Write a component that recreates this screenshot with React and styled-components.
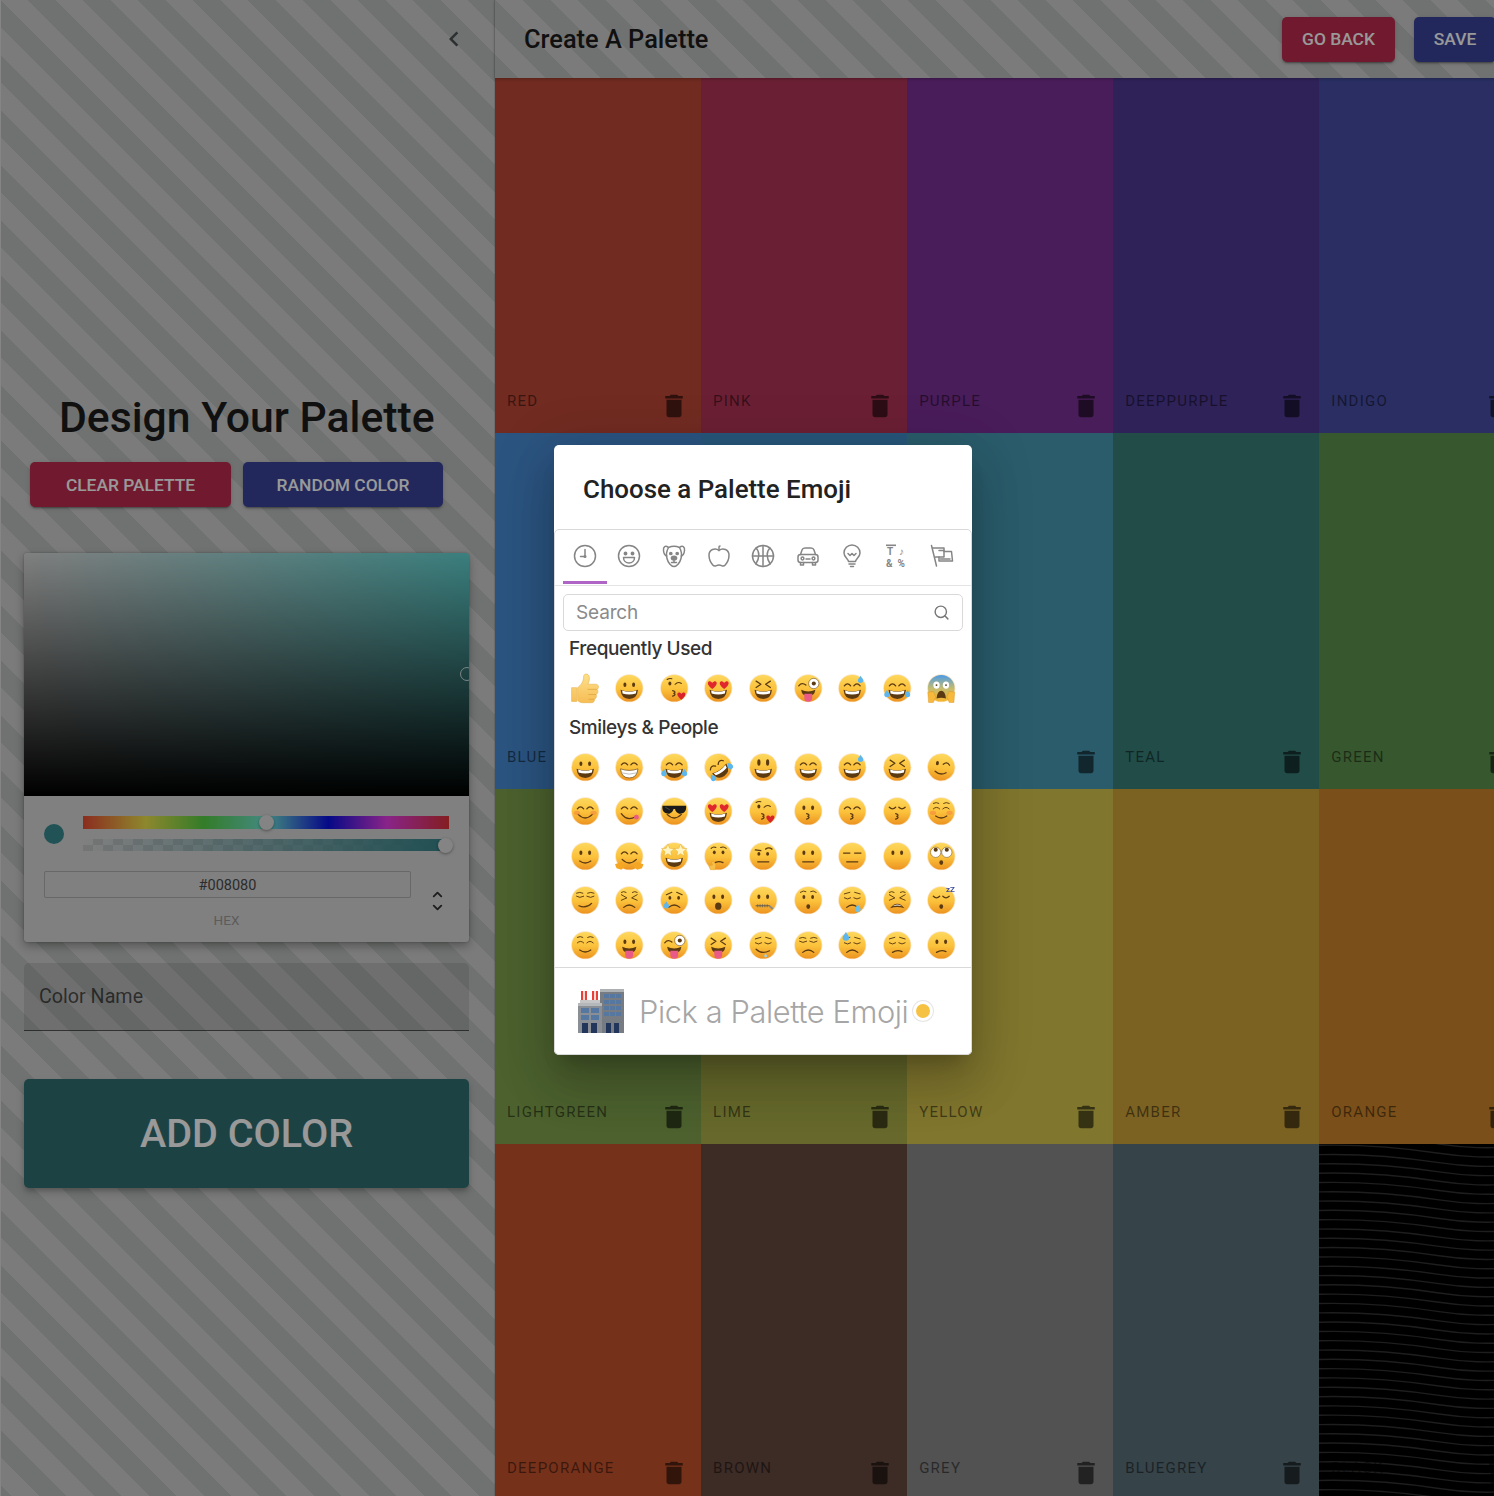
import React from "react";
import styled, { createGlobalStyle } from "styled-components";
import { Apple, ChevronDown, ChevronUp, Search } from "lucide-react";

const GlobalStyle = createGlobalStyle`
  html, body {
    margin: 0;
    overflow: hidden;
    font-family: Roboto, "Liberation Sans", sans-serif;
  }
  * { box-sizing: border-box; }
`;

const PageRoot = styled.div`
  position: relative;
  display: flex;
  width: 1525px;
  height: 1496px;
  overflow: hidden;
  background: repeating-linear-gradient(
    45deg,
    #b9bebb 0 8.2px,
    #cdcdcd 8.2px 27.6px,
    #b9bebb 27.6px 38.89px
  );
`;

const Sidebar = styled.aside`
  flex: 0 0 494.6px;
  display: flex;
  flex-direction: column;
  border-right: 1px solid rgba(0, 0, 0, 0.1);
  box-shadow: inset 1px 0 0 #dedede;
`;

const SidebarHead = styled.div`
  height: 78px;
  display: flex;
  align-items: center;
  justify-content: flex-end;
  padding-right: 25px;
  color: #4c5050;
`;

const Title = styled.h4`
  margin: 318px 0 0;
  font-size: 42.7px;
  line-height: 42px;
  font-weight: 500;
  text-align: center;
  color: #1c1c1c;
`;

const ButtonRow = styled.div`
  display: flex;
  gap: 12px;
  margin: 24px 0 46px 30px;
`;

const RaisedButton = styled.button`
  border: 0;
  border-radius: 5px;
  color: #fff;
  font-family: inherit;
  font-weight: 500;
  font-size: ${(p) => p.$size || 17.4}px;
  text-transform: uppercase;
  width: ${(p) => p.$width}px;
  height: ${(p) => p.$height || 45}px;
  flex: none;
  background: ${(p) => p.$bg};
  box-shadow: 0 3px 1px -2px rgba(0, 0, 0, 0.2), 0 2px 2px rgba(0, 0, 0, 0.14),
    0 1px 5px rgba(0, 0, 0, 0.12);
`;

const Picker = styled.div`
  margin-left: 24px;
  width: 445px;
  height: 389px;
  border-radius: 3px;
  background: #d5d5d5;
  overflow: hidden;
  box-shadow: 0 0 2px rgba(0, 0, 0, 0.3), 0 4px 10px rgba(0, 0, 0, 0.3);
`;

const Saturation = styled.div`
  position: relative;
  height: 243px;
  overflow: hidden;
  background: linear-gradient(to bottom, rgba(0, 0, 0, 0), #000),
    linear-gradient(to right, #d5d5d5, #62d4d2);
`;

const SatPointer = styled.span`
  position: absolute;
  left: 436px;
  top: 114px;
  width: 14px;
  height: 14px;
  border: 1.5px solid #c9dede;
  border-radius: 50%;
`;

const SliderRow = styled.div`
  display: flex;
  align-items: center;
  padding: 20px 20px 0;
  gap: 19px;
`;

const ColorDot = styled.span`
  flex: none;
  width: 20px;
  height: 20px;
  border-radius: 50%;
  background: #36898f;
`;

const Sliders = styled.div`
  flex: 1;
  display: flex;
  flex-direction: column;
  gap: 10px;
`;

const Track = styled.div`
  position: relative;
  height: ${(p) => p.$height}px;
`;

const HueTrack = styled(Track)`
  background: linear-gradient(
    to right,
    #e84a33 0%,
    #ece24c 17%,
    #55cf45 33%,
    #72e6d6 50%,
    #0a10e0 67%,
    #e43ce4 83%,
    #dc3236 100%
  );
`;

const AlphaTrack = styled(Track)`
  background: linear-gradient(to right, rgba(54, 137, 143, 0), #36848a),
    repeating-conic-gradient(#c3c3c3 0 25%, #d5d5d5 0 50%) 0 0 / 20px 12px;
`;

const Thumb = styled.span`
  position: absolute;
  top: 50%;
  left: ${(p) => p.$left}px;
  width: 15px;
  height: 15px;
  margin: -7.5px 0 0 -7.5px;
  border-radius: 50%;
  background: #dcdcdc;
  box-shadow: 0 1px 3px rgba(0, 0, 0, 0.37);
`;

const FieldRow = styled.div`
  display: flex;
  padding: 20px 6px 0 20px;
`;

const HexField = styled.div`
  width: 367px;
  text-align: center;
`;

const HexInput = styled.div`
  height: 27px;
  line-height: 29px;
  font-size: 14.5px;
  color: #4a4a4a;
  border-radius: 2px;
  box-shadow: inset 0 0 0 1px #adadad;
`;

const HexLabel = styled.div`
  margin-top: 14px;
  padding-right: 2px;
  font-size: 13.5px;
  line-height: 16px;
  color: #9a9a9a;
`;

const Toggle = styled.div`
  width: 52px;
  padding-top: 16px;
  display: flex;
  flex-direction: column;
  align-items: center;
  color: #333;
  svg { display: block; margin-bottom: -2px; }
`;

const NameInput = styled.input`
  display: block;
  margin: 21px 0 48px 24px;
  width: 445px;
  height: 68px;
  padding: 0 15px;
  border: 0;
  border-bottom: 1.5px solid rgba(0, 0, 0, 0.55);
  border-radius: 5px 5px 0 0;
  background: rgba(0, 0, 0, 0.09);
  font-family: inherit;
  font-size: 19.7px;
  &::placeholder { color: rgba(0, 0, 0, 0.62); opacity: 1; }
`;

const AddColor = styled(RaisedButton)`
  margin-left: 24px;
  box-shadow: 0 3px 5px -1px rgba(0, 0, 0, 0.2), 0 5px 8px rgba(0, 0, 0, 0.14);
`;

const Main = styled.main`
  flex: 1;
  display: flex;
  flex-direction: column;
  min-width: 0;
`;

const TopBar = styled.header`
  position: relative;
  z-index: 1;
  flex: 0 0 78px;
  display: flex;
  align-items: center;
  padding: 0 29px 0 29.4px;
  box-shadow: 0 1px 3px rgba(0, 0, 0, 0.25);
`;

const TopTitle = styled.h6`
  margin: 0;
  flex: 1;
  font-size: 25.4px;
  font-weight: 500;
  color: #1c1c1c;
`;

const TopActions = styled.div`
  display: flex;
  gap: 19px;
`;

const SwatchGrid = styled.div`
  display: grid;
  grid-template-columns: repeat(5, 1fr);
  grid-auto-rows: 355.4px;
`;

const SwatchBox = styled.div`
  position: relative;
  display: flex;
  align-items: flex-end;
  justify-content: space-between;
  padding: 0 12px 12px 12.4px;
  background: ${(p) => p.$bg};
  overflow: hidden;
`;

const SwatchName = styled.span`
  position: relative;
  margin-bottom: 12px;
  font-size: 15px;
  line-height: 16px;
  letter-spacing: 1.25px;
  text-transform: uppercase;
  color: rgba(0, 0, 0, 0.5);
`;

const Trash = styled.svg`
  position: relative;
  width: 30px;
  height: 30px;
  fill: rgba(0, 0, 0, 0.58);
`;

const Waves = styled.svg`
  position: absolute;
  inset: 0;
  width: 100%;
  height: 100%;
`;

const Backdrop = styled.div`
  position: absolute;
  inset: 0;
  z-index: 2;
  display: flex;
  align-items: center;
  justify-content: center;
  padding: 4px 0 0 1px;
  background: rgba(0, 0, 0, 0.4);
`;

const Dialog = styled.div`
  width: 418px;
  height: 610px;
  display: flex;
  flex-direction: column;
  background: #fff;
  border-radius: 5px;
  box-shadow: 0 14px 19px -9px rgba(0, 0, 0, 0.2), 0 30px 47px 4px rgba(0, 0, 0, 0.14),
    0 11px 57px 10px rgba(0, 0, 0, 0.12);
`;

const DialogTitle = styled.h2`
  margin: 0;
  height: 84px;
  padding: 29px 29px 0;
  font-size: 25.9px;
  line-height: 30px;
  font-weight: 500;
  color: #222;
`;

const EmojiPicker = styled.div`
  flex: 1;
  display: flex;
  flex-direction: column;
  border: 1px solid #d9d9d9;
  border-radius: 5px;
  min-height: 0;
`;

const TabBar = styled.div`
  flex: 0 0 56px;
  display: flex;
  padding: 0 7.5px 1px;
  border-bottom: 1px solid #e4e4e4;
`;

const Tab = styled.span`
  flex: 0 0 44.6px;
  display: flex;
  align-items: center;
  justify-content: center;
  padding-top: 1px;
  border-bottom: 3px solid ${(p) => (p.$active ? "#ae65c5" : "transparent")};
  color: #858585;
  svg { width: 24px; height: 24px; }
`;

const LineIcon = styled.svg`
  fill: none;
  stroke: currentColor;
  stroke-width: 1.5;
  stroke-linecap: round;
  stroke-linejoin: round;
`;

const SearchBox = styled.div`
  flex: none;
  display: flex;
  align-items: center;
  margin: 8px 8px 0;
  height: 37px;
  padding: 0 12px;
  border: 1px solid #d9d9d9;
  border-radius: 5px;
  color: #777;
`;

const SearchInput = styled.input`
  flex: 1;
  min-width: 0;
  border: 0;
  outline: 0;
  padding: 0;
  font-family: "Inter", Roboto, sans-serif;
  font-size: 19px;
  letter-spacing: -0.15px;
  &::placeholder { color: #8a8a8a; opacity: 1; }
`;

const EmojiScroll = styled.div`
  flex: 1;
  min-height: 0;
  overflow: hidden;
`;

const SectionName = styled.div`
  margin: ${(p) => p.$top}px 0 6px 14px;
  height: 22px;
  line-height: 22px;
  font-family: "Inter", Roboto, sans-serif;
  font-size: 19px;
  font-weight: 500;
  letter-spacing: -0.4px;
  color: #333;
`;

const EmojiGrid = styled.div`
  display: grid;
  grid-template-columns: repeat(9, 44.6px);
  grid-auto-rows: 44.5px;
  padding-left: 7.5px;
`;

const EmojiCell = styled.span`
  display: flex;
  align-items: center;
  justify-content: center;
`;

const EmojiSvg = styled.svg`
  width: ${(p) => p.$size || 28.5}px;
  height: ${(p) => p.$size || 28.5}px;
  overflow: visible;
  filter: blur(0.35px);
`;

const Preview = styled.div`
  flex: 0 0 87px;
  display: flex;
  align-items: center;
  padding-left: 23px;
  border-top: 1px solid #d9d9d9;
`;

const PreviewText = styled.span`
  margin-left: 15px;
  font-family: "Inter", Roboto, sans-serif;
  font-size: 30.8px;
  font-weight: 300;
  letter-spacing: -0.4px;
  color: #a6a6a6;
`;

const SkinDot = styled.span`
  flex: none;
  margin: 0 0 0 5px;
  width: 20px;
  height: 20px;
  border-radius: 50%;
  border: 3px solid #fff;
  background: #f6c244;
  box-shadow: 0 0 0 1px #e6e6e6;
`;

const SWATCHES = [
  ["red", "#bc4837"],
  ["pink", "#b23557"],
  ["purple", "#7b3096"],
  ["deeppurple", "#4e3993"],
  ["indigo", "#464ea5"],
  ["blue", "#488cd5"],
  ["lightblue", "#418fcb"],
  ["cyan", "#4699b2"],
  ["teal", "#377f78"],
  ["green", "#5c934e"],
  ["lightgreen", "#7fa24d"],
  ["lime", "#aaaf49"],
  ["yellow", "#d5c54e"],
  ["amber", "#cfa339"],
  ["orange", "#cd842b"],
  ["deeporange", "#c5522d"],
  ["brown", "#66483f"],
  ["grey", "#898989"],
  ["bluegrey", "#5a707a"],
  ["black", "#000"],
];

const INK = "#5b3a12";
const heart = (x, y, s) =>
  `M${x} ${y + s}C${x - s * 1.7} ${y - s * 0.2} ${x - s * 0.7} ${y - s * 1.2} ${x} ${y - s * 0.3}C${x + s * 0.7} ${y - s * 1.2} ${x + s * 1.7} ${y - s * 0.2} ${x} ${y + s}Z`;
const drop = (x, y, s) =>
  `M${x} ${y - s * 1.4}C${x + s * 0.4} ${y - s * 0.6} ${x + s} ${y - s * 0.2} ${x + s} ${y + s * 0.3}A${s} ${s} 0 1 1 ${x - s} ${y + s * 0.3}C${x - s} ${y - s * 0.2} ${x - s * 0.4} ${y - s * 0.6} ${x} ${y - s * 1.4}Z`;
const star = (x, y, r) => {
  const pts = [];
  for (let i = 0; i < 10; i++) {
    const a = -Math.PI / 2 + (i * Math.PI) / 5;
    const d = i % 2 ? r * 0.45 : r;
    pts.push(`${x + d * Math.cos(a)},${y + d * Math.sin(a)}`);
  }
  return pts.join(" ");
};

const Stroke = ({ d, w = 1.6, c = INK }) => (
  <path d={d} fill="none" stroke={c} strokeWidth={w} strokeLinecap="round" strokeLinejoin="round" />
);

const EYES = {
  dots: (
    <>
      <ellipse cx="12.5" cy="13.5" rx="1.9" ry="2.8" fill={INK} />
      <ellipse cx="23.5" cy="13.5" rx="1.9" ry="2.8" fill={INK} />
    </>
  ),
  tall: (
    <>
      <ellipse cx="12.5" cy="12" rx="2" ry="4.2" fill={INK} />
      <ellipse cx="23.5" cy="12" rx="2" ry="4.2" fill={INK} />
    </>
  ),
  arcs: <Stroke d="M8 15Q12 10 16 15M20 15Q24 10 28 15" />,
  closed: <Stroke d="M8 13Q12 17 16 13M20 13Q24 17 28 13" />,
  lashes: <Stroke d="M8 15Q12 11 16 15M20 15Q24 11 28 15M8 8Q12 6 15 8M21 8Q24 6 28 8" w={1.2} />,
  cross: <Stroke d="M9 9L15 13L9 17M27 9L21 13L27 17" />,
  squint: <Stroke d="M8 11L15 15L8 18M28 11L21 15L28 18M8 8Q11 6 14 8M22 8Q25 6 28 8" w={1.2} />,
  wink: (
    <>
      <ellipse cx="12.5" cy="13.5" rx="1.9" ry="2.8" fill={INK} />
      <Stroke d="M20 14Q24 9 28 14" />
    </>
  ),
  kissWink: (
    <>
      <ellipse cx="12.5" cy="12" rx="1.9" ry="2.5" fill={INK} />
      <Stroke d="M19 13Q23 9 27 12M9 7Q12 5 15 6" w={1.3} />
    </>
  ),
  wide: (
    <>
      <Stroke d="M6 15Q10 10 15 14" />
      <circle cx="25" cy="12" r="6.5" fill="#fff" stroke={INK} strokeWidth="0.7" />
      <circle cx="25" cy="12" r="2.6" fill={INK} />
    </>
  ),
  shades: (
    <>
      <path d="M3 11H33V13.5C33 19 29 21 25.5 21S19.5 18 19 15H17C16.5 18 14 21 10.5 21S3 19 3 13.5Z" fill="#1a1a1a" />
      <Stroke d="M7 13L12 16" w={0.8} c="#666" />
    </>
  ),
  hearts: (
    <>
      <path d={heart(10.5, 13, 6)} fill="#e0272e" />
      <path d={heart(25.5, 13, 6)} fill="#e0272e" />
    </>
  ),
  stars: (
    <>
      <polygon points={star(10, 11, 8.5)} fill="#fff5c4" stroke="#e8b640" strokeWidth="0.8" />
      <polygon points={star(26, 11, 8.5)} fill="#fff5c4" stroke="#e8b640" strokeWidth="0.8" />
    </>
  ),
  rolling: (
    <>
      <circle cx="11" cy="13" r="6.5" fill="#fff" stroke={INK} strokeWidth="0.6" />
      <circle cx="25" cy="13" r="6.5" fill="#fff" stroke={INK} strokeWidth="0.6" />
      <circle cx="11" cy="9.8" r="2.6" fill={INK} />
      <circle cx="25" cy="9.8" r="2.6" fill={INK} />
    </>
  ),
  flat: <Stroke d="M7 14H15M21 14H29" />,
  brow: (
    <>
      <ellipse cx="12.5" cy="15" rx="1.9" ry="2.3" fill={INK} />
      <ellipse cx="23.5" cy="15" rx="1.9" ry="2.3" fill={INK} />
      <Stroke d="M8 10L15 11M21 9Q25 6 29 9" />
    </>
  ),
  think: (
    <>
      <ellipse cx="13" cy="13" rx="1.8" ry="2.4" fill={INK} />
      <ellipse cx="24" cy="13" rx="1.8" ry="2.4" fill={INK} />
      <Stroke d="M9 8Q12 5 15 7M21 7Q25 5 28 8" w={1.3} />
    </>
  ),
  smirk: <Stroke d="M7 13Q11 16 16 13M20 13Q25 16 29 13M7 9Q11 7 15 9M21 9Q25 7 29 9" w={1.2} />,
  sad: (
    <>
      <ellipse cx="12.5" cy="15" rx="1.8" ry="2.3" fill={INK} />
      <ellipse cx="23.5" cy="15" rx="1.8" ry="2.3" fill={INK} />
      <Stroke d="M8 11L15 8M28 11L21 8" w={1.3} />
    </>
  ),
  hush: (
    <>
      <ellipse cx="12.5" cy="14" rx="1.8" ry="2.5" fill={INK} />
      <ellipse cx="23.5" cy="14" rx="1.8" ry="2.5" fill={INK} />
      <Stroke d="M8 8Q12 5 15 7M21 7Q24 5 28 8" w={1.2} />
    </>
  ),
  down: <Stroke d="M8 15Q12 18 16 15M20 15Q24 18 28 15M8 10L15 8M28 10L21 8" w={1.2} />,
  scream: (
    <>
      <ellipse cx="12" cy="14" rx="4" ry="4.6" fill="#fff" />
      <ellipse cx="24" cy="14" rx="4" ry="4.6" fill="#fff" />
      <circle cx="12" cy="14" r="1.2" fill={INK} />
      <circle cx="24" cy="14" r="1.2" fill={INK} />
    </>
  ),
};

const MOUTHS = {
  grin: (
    <>
      <path d="M7 20Q18 24 29 20Q28 31.5 18 31.5Q8 31.5 7 20Z" fill={INK} />
      <path d="M9 20.9Q18 24 27 20.9L26.4 24.6Q18 27 9.6 24.6Z" fill="#fff" />
    </>
  ),
  teeth: (
    <>
      <path d="M7 20Q18 24 29 20Q28 31.5 18 31.5Q8 31.5 7 20Z" fill="#fff" stroke={INK} strokeWidth="0.8" />
      <Stroke d="M8 25Q18 28.5 28 25" w={0.8} c="#9a9a9a" />
    </>
  ),
  smile: <Stroke d="M9 22Q18 31 27 22" />,
  gentle: <Stroke d="M11 24Q18 29 25 24" />,
  yum: (
    <>
      <Stroke d="M8 21Q15 31 26 25" />
      <circle cx="27" cy="25.5" r="3" fill="#ea5a86" />
    </>
  ),
  open: <ellipse cx="18" cy="25.5" rx="4" ry="4.6" fill={INK} />,
  small: <ellipse cx="18" cy="26" rx="2.4" ry="3" fill={INK} />,
  flat: <Stroke d="M11 25H25" />,
  zip: (
    <>
      <Stroke d="M9 25H26" w={1.2} c="#555" />
      <Stroke d="M11 23.5V26.5M14 23.5V26.5M17 23.5V26.5M20 23.5V26.5M23 23.5V26.5" w={0.8} c="#555" />
      <path d="M26 24L31 28L29 30L25 26Z" fill="#888" />
    </>
  ),
  tongue: (
    <>
      <path d="M9 20Q18 24 27 20Q26 28 18 28Q10 28 9 20Z" fill={INK} />
      <path d="M13 25H23V30A5 5 0 0 1 13 30Z" fill="#ea5a86" />
    </>
  ),
  frown: <Stroke d="M11 27Q18 21 25 27" />,
  kiss: <Stroke d="M16 21Q21 22.5 17.5 24.5Q21 26 16 28" />,
  smirk: <Stroke d="M10 25Q19 29 26 22" />,
  drool: <Stroke d="M9 23Q16 30 26 25" />,
  unsure: <Stroke d="M12 27Q18 23 24 26" />,
  weary: (
    <>
      <path d="M9 28Q18 17 27 28Q18 25 9 28Z" fill={INK} />
      <path d="M12 25.5Q18 21 24 25.5Q18 23.6 12 25.5Z" fill="#fff" />
    </>
  ),
  wail: <path d="M12 31Q13 21 18 21T24 31Q18 29 12 31Z" fill={INK} />,
};

const EXTRAS = {
  tears: (
    <>
      <path d={drop(5, 25, 3.4)} fill="#5db7ee" />
      <path d={drop(31, 25, 3.4)} fill="#5db7ee" />
    </>
  ),
  sweat: <path d={drop(28.5, 7, 3.4)} fill="#5db7ee" />,
  sweatLeft: <path d={drop(8, 24, 3.4)} fill="#5db7ee" />,
  sweatTop: <path d={drop(10, 7, 4.2)} fill="#5db7ee" />,
  snot: <path d={drop(25, 28, 3.6)} fill="#6cc2ee" />,
  heart: <path d={heart(27, 27, 5.4)} fill="#d8232a" />,
  blush: (
    <>
      <ellipse cx="7.5" cy="20" rx="4" ry="2.6" fill="#f4813f" opacity="0.55" />
      <ellipse cx="28.5" cy="20" rx="4" ry="2.6" fill="#f4813f" opacity="0.55" />
    </>
  ),
  hands: (
    <>
      <path d="M0 28L9 25L13 31L8 35L2 33Z" fill="#f5a623" />
      <path d="M36 28L27 25L23 31L28 35L34 33Z" fill="#f5a623" />
    </>
  ),
  chin: <path d="M9 25L13 25L15 29L14 35L8 35L6 30L11 29Z" fill="#f7c04a" stroke="#e09a20" strokeWidth="0.5" />,
  drip: <path d={drop(21, 31, 1.8)} fill="#9ad4ee" />,
  zzz: (
    <text x="24" y="8" fontFamily="Roboto, sans-serif" fontSize="10" fontWeight="700" fill="#3b4aa6">
      zZ
    </text>
  ),
  palms: (
    <>
      <path d="M1 23L8 22L11 29L8 36L2 36Z" fill="#f6b93b" stroke="#d98d1c" strokeWidth="0.5" />
      <path d="M35 23L28 22L25 29L28 36L34 36Z" fill="#f6b93b" stroke="#d98d1c" strokeWidth="0.5" />
    </>
  ),
};

const Face = ({ eyes, mouth, extra, tilt, grad = "faceFill" }) => (
  <EmojiSvg viewBox="0 0 36 36">
    <g transform={tilt ? `rotate(${tilt} 18 18)` : undefined}>
      <circle cx="18" cy="18" r="17.8" fill="#fbe3c2" />
      <circle cx="18" cy="18" r="16.8" fill={`url(#${grad})`} />
      {EYES[eyes]}
      {MOUTHS[mouth]}
      {extra && EXTRAS[extra]}
    </g>
  </EmojiSvg>
);

const ThumbsUp = () => (
  <EmojiSvg viewBox="0 0 36 36" $size={31}>
    <path
      d="M3 17H9V33H3ZM10 17C14 14 17 10 17 4C17 1 21 0 23 3C24.5 6 23.5 10 22 13H31C35 13 35 18 32.5 19C34.5 21 33.5 24 31.5 25C32.5 27 31.5 30 29.5 30.5C30 33 28.5 34.5 26 34.5H16C13 34.5 11 33 10 32Z"
      fill="url(#thumbFill)"
      stroke="#e6a93c"
      strokeWidth="0.6"
    />
    <Stroke d="M22 19H32M23 25H31M23 30.5H29" w={0.8} c="#dc9f3c" />
  </EmojiSvg>
);

const Building = () => (
  <EmojiSvg viewBox="0 0 46 46" $size={46}>
    <rect x="22" y="1" width="24" height="44" fill="#777c82" />
    <rect x="22" y="1" width="24" height="3" fill="#aeb1b4" />
    <rect x="0" y="15" width="24" height="30" fill="#8a8f95" />
    <rect x="0" y="15" width="24" height="3" fill="#b5b8bb" />
    <rect x="3" y="3" width="6" height="9" fill="#e8413a" />
    <rect x="14" y="3" width="6" height="9" fill="#e8413a" />
    <path d="M5 3H7V12H5ZM16 3H18V12H16Z" fill="#f3dcd4" />
    <path d="M2 12H22V15H2Z" fill="#c6c6c6" />
    {[6, 12, 18, 24].map((y) =>
      [26, 32, 38].map((x) => <rect key={`${x}-${y}`} x={x} y={y} width="5" height="4" fill="#56779f" />)
    )}
    {[20, 27].map((y) =>
      [3, 13].map((x) => <rect key={`${x}-${y}`} x={x} y={y} width="8" height="5" fill="#56779f" />)
    )}
    <rect x="4" y="35" width="6" height="10" fill="#22355a" />
    <rect x="13" y="35" width="6" height="10" fill="#22355a" />
    <rect x="28" y="35" width="5" height="10" fill="#22355a" />
    <rect x="36" y="35" width="5" height="10" fill="#22355a" />
  </EmojiSvg>
);

const F = (eyes, mouth, extra, tilt) => ({ eyes, mouth, extra, tilt });

const KISS_HEART = F("kissWink", "kiss", "heart");
const HEART_EYES = F("hearts", "grin");
const X_GRIN = F("cross", "grin");
const WACKY = F("wide", "tongue");
const SWEAT = F("arcs", "grin", "sweat");
const JOY = F("arcs", "grin", "tears");
const GRINNING = F("dots", "grin");

const FREQUENT = [null, GRINNING, KISS_HEART, HEART_EYES, X_GRIN, WACKY, SWEAT, JOY, { ...F("scream", "wail", "palms"), grad: "screamFill" }];

const SMILEYS = [
  GRINNING,
  F("arcs", "teeth"),
  JOY,
  F("arcs", "grin", "tears", -35),
  F("tall", "grin"),
  F("arcs", "grin"),
  SWEAT,
  X_GRIN,
  F("wink", "gentle", null, 8),

  F("arcs", "smile", "blush"),
  F("arcs", "yum"),
  F("shades", "smile"),
  HEART_EYES,
  KISS_HEART,
  F("dots", "kiss"),
  F("arcs", "kiss"),
  F("closed", "kiss"),
  F("lashes", "gentle", "blush"),

  F("dots", "gentle"),
  F("arcs", "smile", "hands"),
  F("stars", "grin"),
  F("think", "unsure", "chin"),
  F("brow", "flat"),
  F("dots", "flat"),
  F("flat", "flat"),
  { eyes: "dots" },
  F("rolling", "small"),

  F("smirk", "smirk"),
  F("squint", "frown"),
  F("sad", "frown", "sweatLeft"),
  F("dots", "open"),
  F("dots", "zip"),
  F("hush", "small"),
  F("down", "frown", "snot"),
  F("squint", "weary"),
  F("closed", "small", "zzz"),

  F("lashes", "gentle"),
  F("dots", "tongue"),
  WACKY,
  F("cross", "tongue"),
  F("down", "drool", "drip"),
  F("smirk", "frown"),
  F("down", "frown", "sweatTop"),
  F("down", "unsure"),
  F("dots", "unsure"),
];

const ClockTab = () => (
  <LineIcon viewBox="0 0 24 24">
    <circle cx="12" cy="12" r="10.5" />
    <path d="M12 5.5V12.5H7.5" />
    <circle cx="12" cy="12.5" r="0.8" fill="currentColor" />
  </LineIcon>
);

const SmileTab = () => (
  <LineIcon viewBox="0 0 24 24">
    <circle cx="12" cy="12" r="10.5" />
    <circle cx="8.5" cy="9.5" r="1.2" fill="currentColor" />
    <circle cx="15.5" cy="9.5" r="1.2" fill="currentColor" />
    <path d="M6.5 13.5H17.5C17.5 17 15 19 12 19S6.5 17 6.5 13.5Z" />
  </LineIcon>
);

const DogTab = () => (
  <LineIcon viewBox="0 0 24 24">
    <path d="M6.5 3.5C3.5 1 1 2.5 1.5 6.5C1.8 9.5 3 11.5 4.8 12M17.5 3.5C20.5 1 23 2.5 22.5 6.5C22.2 9.5 21 11.5 19.2 12" />
    <path d="M6.5 3.5C10 2 14 2 17.5 3.5C19.5 7 20 11 19 14.5C18 18.5 15 22.5 12 22.5S6 18.5 5 14.5C4 11 4.5 7 6.5 3.5Z" />
    <circle cx="8.8" cy="9.5" r="1.1" fill="currentColor" />
    <circle cx="15.2" cy="9.5" r="1.1" fill="currentColor" />
    <ellipse cx="12" cy="14" rx="2.6" ry="1.8" fill="currentColor" />
    <path d="M12 15.5V18.5M9.5 18.5H14.5" />
  </LineIcon>
);

const BallTab = () => (
  <LineIcon viewBox="0 0 24 24">
    <circle cx="12" cy="12" r="10.5" />
    <path d="M12 1.5V22.5M1.5 12H22.5M5 4C8.5 7 9 14 4.8 20M19 4C15.5 7 15 14 19.2 20" />
  </LineIcon>
);

const CarTab = () => (
  <LineIcon viewBox="0 0 24 24">
    <path d="M4.5 10.5L6 6C6.5 4.5 7.5 4 9 4H15C16.5 4 17.5 4.5 18 6L19.5 10.5" />
    <rect x="2" y="10.5" width="20" height="8" rx="2.5" />
    <circle cx="6.5" cy="14.5" r="1.4" />
    <circle cx="17.5" cy="14.5" r="1.4" />
    <path d="M10 15H14M4.5 18.5V21H7.5V18.5M16.5 18.5V21H19.5V18.5" />
  </LineIcon>
);

const BulbTab = () => (
  <LineIcon viewBox="0 0 24 24">
    <path d="M8.5 17.5C8.5 15 4 13.5 4 9A8 8 0 0 1 20 9C20 13.5 15.5 15 15.5 17.5Z" />
    <path d="M8 9.5L10 11.5L12 9.5L14 11.5L16 9.5" />
    <path d="M9 20H15M10.5 22.5H13.5" />
  </LineIcon>
);

const SymbolsTab = () => (
  <svg viewBox="0 0 24 24" fill="currentColor" fontFamily="Roboto, sans-serif" fontWeight="700" overflow="visible">
    <rect x="1" y="0.5" width="10" height="1.6" />
    <text x="2" y="11" fontSize="10">T</text>
    <text x="1" y="22.5" fontSize="10">&amp;</text>
    <text x="12.5" y="22.5" fontSize="10">%</text>
    <text x="14" y="11" fontSize="10">♪</text>
  </svg>
);

const FlagTab = () => (
  <LineIcon viewBox="0 0 24 24">
    <path d="M1.5 1.5L6.5 22M3 4H14V13H5.5" />
    <path d="M9 6.5H14M14 7.5H21.5L22.5 17H9V13" />
    <path d="M10.5 15H20" />
  </LineIcon>
);

const wavePaths = Array.from({ length: 40 }, (_, i) => {
  const y = i * 9.3 - 8;
  return `M0 ${y}C45 ${y - 1} 80 ${y + 2} 120 ${y + 8}S180 ${y + 11} 207 ${y + 11}`;
});

const Swatch = ({ name, color }) => (
  <SwatchBox $bg={color}>
    {name === "black" && (
      <Waves viewBox="0 0 206 355" preserveAspectRatio="none">
        {wavePaths.map((d) => (
          <path key={d} d={d} fill="none" stroke="#323232" strokeWidth="1.4" />
        ))}
      </Waves>
    )}
    <SwatchName>{name}</SwatchName>
    <Trash viewBox="0 0 24 24">
      <path d="M6 19c0 1.1.9 2 2 2h8c1.1 0 2-.9 2-2V7H6v12zM19 4h-3.5l-1-1h-5l-1 1H5v2h14V4z" />
    </Trash>
  </SwatchBox>
);

const App = () => (
  <PageRoot>
    <GlobalStyle />
    <svg width="0" height="0" style={{ position: "absolute" }}>
      <defs>
        <linearGradient id="faceFill" x1="0" y1="0" x2="0" y2="1">
          <stop offset="0" stopColor="#fdd85c" />
          <stop offset="0.55" stopColor="#fbc03a" />
          <stop offset="1" stopColor="#ec9320" />
        </linearGradient>
        <linearGradient id="screamFill" x1="0" y1="0" x2="0" y2="1">
          <stop offset="0" stopColor="#4a9be8" />
          <stop offset="0.5" stopColor="#c4bc70" />
          <stop offset="1" stopColor="#f6b52e" />
        </linearGradient>
        <linearGradient id="thumbFill" x1="0" y1="0" x2="0" y2="1">
          <stop offset="0" stopColor="#fde08a" />
          <stop offset="1" stopColor="#f6bd55" />
        </linearGradient>
      </defs>
    </svg>

    <Sidebar>
      <SidebarHead>
        <svg width="30" height="30" viewBox="0 0 24 24" fill="currentColor">
          <path d="M15.41 7.41L14 6l-6 6 6 6 1.41-1.41L10.83 12z" />
        </svg>
      </SidebarHead>
      <Title>Design Your Palette</Title>
      <ButtonRow>
        <RaisedButton $bg="#bc2b4d" $width={201}>Clear Palette</RaisedButton>
        <RaisedButton $bg="#394499" $width={200}>Random Color</RaisedButton>
      </ButtonRow>
      <Picker>
        <Saturation>
          <SatPointer />
        </Saturation>
        <SliderRow>
          <ColorDot />
          <Sliders>
            <HueTrack $height={13}>
              <Thumb $left={183} />
            </HueTrack>
            <AlphaTrack $height={12}>
              <Thumb $left={362} />
            </AlphaTrack>
          </Sliders>
        </SliderRow>
        <FieldRow>
          <HexField>
            <HexInput>#008080</HexInput>
            <HexLabel>HEX</HexLabel>
          </HexField>
          <Toggle>
            <ChevronUp size={15} strokeWidth={3} />
            <ChevronDown size={15} strokeWidth={3} />
          </Toggle>
        </FieldRow>
      </Picker>
      <NameInput placeholder="Color Name" />
      <AddColor $bg="#2f6e71" $width={445} $height={109} $size={39.6}>Add Color</AddColor>
    </Sidebar>

    <Main>
      <TopBar>
        <TopTitle>Create A Palette</TopTitle>
        <TopActions>
          <RaisedButton $bg="#bc2b4d" $width={113}>Go Back</RaisedButton>
          <RaisedButton $bg="#394499" $width={82}>Save</RaisedButton>
        </TopActions>
      </TopBar>
      <SwatchGrid>
        {SWATCHES.map(([name, color]) => (
          <Swatch key={name} name={name} color={color} />
        ))}
      </SwatchGrid>
    </Main>

    <Backdrop>
      <Dialog>
        <DialogTitle>Choose a Palette Emoji</DialogTitle>
        <EmojiPicker>
          <TabBar>
            <Tab $active><ClockTab /></Tab>
            <Tab><SmileTab /></Tab>
            <Tab><DogTab /></Tab>
            <Tab><Apple strokeWidth={1.5} /></Tab>
            <Tab><BallTab /></Tab>
            <Tab><CarTab /></Tab>
            <Tab><BulbTab /></Tab>
            <Tab><SymbolsTab /></Tab>
            <Tab><FlagTab /></Tab>
          </TabBar>
          <SearchBox>
            <SearchInput placeholder="Search" />
            <Search size={17} />
          </SearchBox>
          <EmojiScroll>
            <SectionName $top={7}>Frequently Used</SectionName>
            <EmojiGrid>
              {FREQUENT.map((f, i) => (
                <EmojiCell key={i}>{f ? <Face {...f} /> : <ThumbsUp />}</EmojiCell>
              ))}
            </EmojiGrid>
            <SectionName $top={6}>Smileys &amp; People</SectionName>
            <EmojiGrid>
              {SMILEYS.map((f, i) => (
                <EmojiCell key={i}><Face {...f} /></EmojiCell>
              ))}
            </EmojiGrid>
          </EmojiScroll>
          <Preview>
            <Building />
            <PreviewText>Pick a Palette Emoji</PreviewText>
            <SkinDot />
          </Preview>
        </EmojiPicker>
      </Dialog>
    </Backdrop>
  </PageRoot>
);

export default App;
